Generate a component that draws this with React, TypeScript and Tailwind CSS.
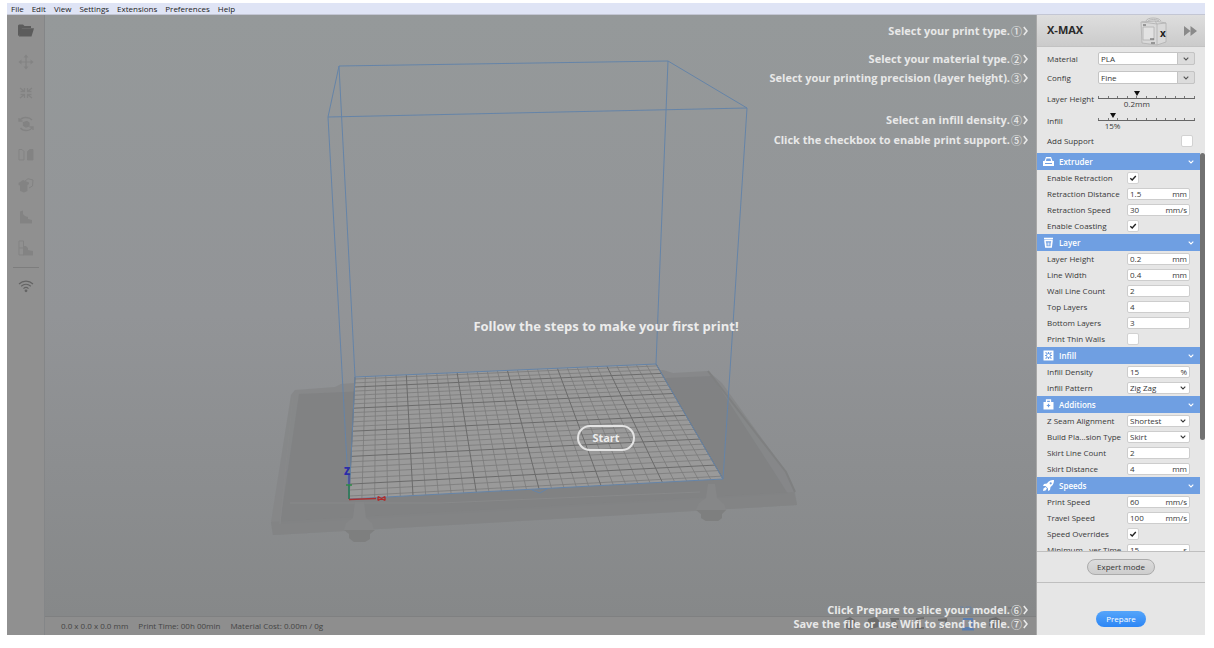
import React from "react";

type Pt = [number, number];

const MENU = ["File", "Edit", "View", "Settings", "Extensions", "Preferences", "Help"];

/* Build plate corners: back-left, back-right, front-right, front-left */
const PLATE: Pt[] = [[355, 377], [656, 364], [723, 479], [349, 499]];

/* Projects plate coordinates (0..1, 0..1) to the screen */
function project(u: number, v: number): Pt {
  const [[x0, y0], [x1, y1], [x2, y2], [x3, y3]] = PLATE;
  const dx1 = x1 - x2, dx2 = x3 - x2, sx = x0 - x1 + x2 - x3;
  const dy1 = y1 - y2, dy2 = y3 - y2, sy = y0 - y1 + y2 - y3;
  const det = dx1 * dy2 - dx2 * dy1;
  const g = (sx * dy2 - dx2 * sy) / det;
  const h = (dx1 * sy - sx * dy1) / det;
  const w = g * u + h * v + 1;
  return [
    ((x1 - x0 + g * x1) * u + (x3 - x0 + h * x3) * v + x0) / w,
    ((y1 - y0 + g * y1) * u + (y3 - y0 + h * y3) * v + y0) / w,
  ];
}

function seg(a: Pt, b: Pt) {
  return `M${a[0].toFixed(1)} ${a[1].toFixed(1)}L${b[0].toFixed(1)} ${b[1].toFixed(1)}`;
}

let minor = "";
let major = "";
for (let i = 0; i <= 30; i++) {
  const d = seg(project(i / 30, 0), project(i / 30, 1));
  if (i % 5 === 0) major += d;
  else minor += d;
}
for (let i = 0; i < 25; i++) {
  const v = (i + 0.5) / 25;
  const d = seg(project(0, v), project(1, v));
  if (i % 5 === 2) major += d;
  else minor += d;
}

function Scene() {
  return (
    <svg viewBox="45 15 991 601" preserveAspectRatio="xMidYMid meet" className="block h-full w-full" aria-hidden="true">
      <g>
        <path d="M295 390L335 387L341 384L355 383L663 370L673 373L708 371L722 383L786 472L795 492L797 505L540 520L273 535L271 522L291 395Z" fill="#858687" opacity="0.8" />
        <path d="M299 394L712 376L778 478L788 494L280 524Z" fill="#7f8081" opacity="0.75" />
        <path d="M271 522L794 492L797 505L273 535Z" fill="#828384" opacity="0.8" />
        <path d="M708 371L786 472L795 492" fill="none" stroke="#7f8081" strokeWidth="2" />
        <path d="M293 395L280 524M290 503L440 503L700 492" fill="none" stroke="#88898a" strokeWidth="1" />
        <path d="M355 502h9l2 16l6 5l2 7l-5 3v6l-5 3h-10l-5-4v-5l-5-3l2-7l7-5z" fill="#868788" />
        <path d="M344 530h31l-5 4v5l-5 3h-11l-5-4v-4z" fill="#7e7f7f" />
        <path d="M708 484h7l2 14l7 6l2 6l-4 4v4l-4 3h-12l-5-3v-4l-5-4l3-7l7-5z" fill="#868788" />
        <path d="M696 510h30l-4 4v4l-4 3h-12l-5-3v-4z" fill="#7e7f7f" />
      </g>
      <path d="M355 377L656 364L723 479L349 499Z" fill="#9a9a9a" />
      <path d={minor} stroke="#7b7b7b" strokeWidth="0.8" fill="none" />
      <path d={major} stroke="#6b6b6b" strokeWidth="1" fill="none" />
      <g fill="none" stroke="#6584a8" strokeWidth="1">
        <path d="M355 377L656 364L723 479L349 499Z" />
        <path d="M339 66L668 61L747 108L328 117Z" />
        <path d="M339 66L355 377M668 61L656 364M747 108L723 479M328 117L349 499" />
        <path d="M532 490L540 493L547 489" />
      </g>
      <path d="M349 499V475" stroke="#3a3aa0" strokeWidth="1.2" />
      <path d="M349 499V485M346 485H352" stroke="#2f8a45" strokeWidth="1.4" />
      <path d="M349 499.500L376 498.500" stroke="#a83232" strokeWidth="1.4" />
      <text x="344" y="475" fontSize="10" fontWeight="800" fill="#2c2ca8">Z</text>
      <path d="M378 496.500L385 500.500M378 500.500L385 496.500M378 496.500V500.500M385 496.500V500.500" stroke="#b02a2a" strokeWidth="1.300" />
    </svg>
  );
}

const toolBtn = "flex h-[31px] w-full items-center justify-center";

function Toolbar() {
  return (
    <nav aria-label="Tools" className="flex w-[38px] shrink-0 flex-col items-center border-r border-[#848688] bg-[#909090] text-[#838383]">
      <button aria-label="Open" className={toolBtn + " text-[#5c5c5c]"}>
        <svg width="16" height="13" viewBox="0 0 16 13" fill="currentColor"><path d="M0 1.500L1 0.500H5L6.500 2H13V4H4L1.500 11L0.500 12L0 11Z" /><path d="M2.500 4.300H16L13.500 12.500H1Z" /></svg>
      </button>
      <button aria-label="Move" className={toolBtn}>
        <svg width="16" height="16" viewBox="0 0 16 16" fill="currentColor"><path d="M8 0.500L10.500 3.500H8.600V7.400H12.500V5.500L15.500 8L12.500 10.500V8.600H8.600V12.500H10.500L8 15.500L5.500 12.500H7.400V8.600H3.500V10.500L0.500 8L3.500 5.500V7.400H7.400V3.500H5.500Z" /></svg>
      </button>
      <button aria-label="Scale" className={toolBtn}>
        <svg width="14" height="14" viewBox="0 0 14 14" fill="none" stroke="currentColor" strokeWidth="1.300"><path d="M1 2L5.500 5.500M5.500 2V5.500H1.500M13 2L8.500 5.500M8.500 2V5.500H12.500M1 12L5.500 8.500M5.500 12V8.500H1.500M13 12L8.500 8.500M8.500 12V8.500H12.500" /></svg>
      </button>
      <button aria-label="Rotate" className={toolBtn}>
        <svg width="16" height="16" viewBox="0 0 16 16" fill="none" stroke="currentColor" strokeWidth="1.300"><path d="M1 2V5H4.500M1.200 5C4 0.500 11 0.500 14 4M15 14V11H11.500M14.800 11C12 15.500 5 15.500 2.500 12" /><path d="M5.500 6.500L9 5.500L11 7V10L8 11L5.500 9.500Z" fill="currentColor" /></svg>
      </button>
      <button aria-label="Mirror" className={toolBtn}>
        <svg width="16" height="13" viewBox="0 0 16 13" fill="none" stroke="currentColor" strokeWidth="1"><path d="M1 1.500H4L6 3.500V12H1Z" /><path d="M15 1.500H12L9.500 3.500V12H15Z" fill="currentColor" /></svg>
      </button>
      <button aria-label="Per model settings" className={toolBtn}>
        <svg width="16" height="15" viewBox="0 0 16 15" fill="currentColor"><path d="M0.500 5L5 2L11 4.500V6L9.500 7V13L6 14.500L2 13V7.500L0.500 7Z" /><path d="M7 3L10 0.700L15 2L14.500 8L11 10" fill="none" stroke="currentColor" strokeWidth="1" /></svg>
      </button>
      <button aria-label="Support blocker" className={toolBtn}>
        <svg width="14" height="14" viewBox="0 0 14 14" fill="currentColor"><path d="M1 1.500L4 0.500V4L6 6L9 7V9L13 10V13.500H1Z" /></svg>
      </button>
      <button aria-label="Support editor" className={toolBtn}>
        <svg width="16" height="16" viewBox="0 0 16 16" fill="currentColor"><path d="M5 6H8L10 8V10L15 11V15.500H5Z" /><path d="M1 1H5.500V15H1ZM1 8H5" fill="none" stroke="currentColor" strokeWidth="1" /></svg>
      </button>
      <hr className="mt-1 w-[26px] border-[#7d7d7d]" />
      <button aria-label="Wi-Fi" className={toolBtn + " mt-0.5 text-[#646464]"}>
        <svg width="16" height="14" viewBox="0 0 16 14" fill="none" stroke="currentColor" strokeWidth="1.200"><path d="M1 5C5 1.200 11 1.200 15 5M3.200 7.300C6 4.800 10 4.800 12.800 7.300M5.500 9.600C7 8.200 9 8.200 10.500 9.600" /><circle cx="8" cy="11.800" r="1.400" fill="currentColor" stroke="none" /></svg>
      </button>
    </nav>
  );
}

function Hint({ text, mark }: { text: string; mark: string }) {
  return (
    <p className="flex h-[14px] items-center justify-end whitespace-nowrap text-[11px] font-bold leading-[14px] text-[#e8e8e8]">
      <span>{text}</span>
      <span className="w-[13px] text-center font-['Noto_Sans_CJK_SC',sans-serif] font-medium">{mark}</span>
      <svg width="5" height="10" viewBox="0 0 5 10" fill="none" stroke="currentColor" strokeWidth="1.600" aria-hidden="true"><path d="M0.800 1L4 5L0.800 9" /></svg>
    </p>
  );
}

function StatusIcons() {
  return (
    <svg width="190" height="26" viewBox="0 0 190 26" aria-hidden="true" className="absolute bottom-1 right-4">
      <g fill="#6c6c6c">
        <path d="M14 15l6-3l5 3v7l-5 3l-6-3zM38 14l7-2l4 3v7l-8 2l-4-3zM60 13h9v2h-3l2 8h-9v-2h4zM86 13l8-1v2h-5v8h5v2h-8zM108 14l9-1v8l-6 3v-3h4v-5h-7zM159 14l7-2l5 3v6l-6 3l-6-3z" />
        <path d="M166 2h3v7h-3zM172 2l6 6M178 2h4v2h-4z" opacity="0.5" />
      </g>
      <path d="M115 14h8v9h-8zM113 24.500h12" fill="none" stroke="#5b7eb0" strokeWidth="2" transform="translate(19 0)" />
      <path d="M130 2h3v7M136 2h5v6h-5z" fill="none" stroke="#5b7eb0" strokeWidth="1" opacity="0.6" />
    </svg>
  );
}

function Viewport() {
  return (
    <main className="relative flex min-w-0 flex-1 flex-col">
      <div className="min-h-0 flex-1 bg-linear-to-b from-[#95999a] via-[#929497] to-[#868889]">
        <Scene />
      </div>
      <footer className="flex h-[19px] shrink-0 items-center gap-2.5 border-t border-[#7f8081] bg-[#8e8e8e] pl-4 text-[8px] text-[#444]">
        <span>0.0 x 0.0 x 0.0 mm</span>
        <span>Print Time: 00h 00min</span>
        <span>Material Cost: 0.00m / 0g</span>
      </footer>
      <StatusIcons />
      <div className="absolute inset-0 flex flex-col justify-between pb-1 pr-2 pt-[9px]">
        <div>
          <Hint text="Select your print type." mark="①" />
          <div className="mt-[14px] flex flex-col gap-[5px]">
            <Hint text="Select your material type." mark="②" />
            <Hint text="Select your printing precision (layer height)." mark="③" />
          </div>
          <div className="mt-7 flex flex-col gap-[6px]">
            <Hint text="Select an infill density." mark="④" />
            <Hint text="Click the checkbox to enable print support." mark="⑤" />
          </div>
        </div>
        <div>
          <Hint text="Click Prepare to slice your model." mark="⑥" />
          <Hint text="Save the file or use Wifi to send the file." mark="⑦" />
        </div>
      </div>
      <div className="absolute inset-x-0 top-[49%] -mt-px flex flex-col items-center pl-[131px] text-[#ececec]">
        <h1 className="text-[13px] font-bold leading-4">Follow the steps to make your first print!</h1>
        <button className="mt-[91px] h-[26px] w-[58px] rounded-full border-2 border-[#e4e4e4] text-[11px] font-bold">Start</button>
      </div>
    </main>
  );
}

function Chevron() {
  return (
    <svg width="6" height="4" viewBox="0 0 6 4" fill="none" stroke="currentColor" strokeWidth="1.100" aria-hidden="true" className="pointer-events-none">
      <path d="M0.700 0.700L3 3L5.300 0.700" />
    </svg>
  );
}

function CheckBox({ id, checked }: { id: string; checked?: boolean }) {
  return (
    <span className="relative flex size-3">
      <input id={id} type="checkbox" defaultChecked={checked} className="peer size-3 appearance-none rounded-xs border border-[#d2d2d2] bg-white" />
      <svg viewBox="0 0 12 12" className="pointer-events-none absolute inset-0 hidden peer-checked:block" fill="none" stroke="#222" strokeWidth="1.400" aria-hidden="true">
        <path d="M3.300 6.200L5.200 8L8.800 4" />
      </svg>
    </span>
  );
}

type Field = { label: string; value?: string; unit?: string; check?: boolean; options?: string[] };

function SettingRow({ id, field }: { id: string; field: Field }) {
  return (
    <div className="flex h-4 items-center px-[10px]">
      <label htmlFor={id} className="w-20 shrink-0 whitespace-nowrap">{field.label}</label>
      {field.check !== undefined ? (
        <CheckBox id={id} checked={field.check} />
      ) : field.options ? (
        <div className="relative flex min-w-0 flex-1 items-center">
          <select id={id} defaultValue={field.options[0]} className="h-3 w-full appearance-none rounded-xs border border-[#cdcdcd] bg-white pl-[2px] leading-[10px]">
            {field.options.map((o) => <option key={o}>{o}</option>)}
          </select>
          <span className="pointer-events-none absolute right-1"><Chevron /></span>
        </div>
      ) : (
        <div className="flex h-3 min-w-0 flex-1 items-center rounded-xs border border-[#cdcdcd] bg-white px-[2px]">
          <input id={id} defaultValue={field.value} className="h-[10px] w-full min-w-0 flex-1 bg-transparent leading-[10px] outline-none" />
          {field.unit && <span className="leading-[10px]">{field.unit}</span>}
        </div>
      )}
    </div>
  );
}

const ICONS: Record<string, React.ReactNode> = {
  Extruder: <><path d="M3 1h5l1.500 4H11v5H0V5h1.500z" fill="#fff" /><path d="M3.500 2.500h4L8 5H3z" fill="#6f9fe2" /><path d="M2 7.500h7" stroke="#6f9fe2" /></>,
  Layer: <><path d="M1 1.500h9M1.300 3.500h8.400M2 4l.8 6h5.400L9 4" fill="none" stroke="#fff" strokeWidth="1.500" /><path d="M4 5.500v3M5.500 5.500v3M7 5.500v3" stroke="#fff" strokeWidth="0.700" /></>,
  Infill: <><path d="M0.500 0.500h10v10h-10z" fill="#fff" /><path d="M5.500 2v2M5.500 7v2M2 5.500h2M7 5.500h2M2.500 2.500l1.500 1M8.500 2.500l-1.500 1M2.500 8.500L4 7.500M8.500 8.500L7 7.500" stroke="#6f9fe2" strokeWidth="1.200" /><circle cx="5.500" cy="5.500" r="2" fill="none" stroke="#6f9fe2" strokeWidth="0.800" /></>,
  Additions: <><path d="M0.500 3h10v7.500h-10z" fill="#fff" /><path d="M3.500 3V1h4v2" fill="none" stroke="#fff" strokeWidth="1.300" /><path d="M5.500 4.800v3.400M3.800 6.500h3.400" stroke="#6f9fe2" strokeWidth="1.200" /></>,
  Speeds: <><path d="M11 0C7 0 5.500 1.500 4 3.500L1 4L0 6L2.500 6L5 8.500V11L7 10L7.500 7C9.500 5.500 11 4 11 0Z" fill="#fff" /><circle cx="7.700" cy="3.300" r="1.100" fill="#6f9fe2" /><path d="M2.500 7L0.500 8.500L0 11L2.500 10.500L4 8.500Z" fill="#fff" /></>,
};

const SECTIONS: { title: string; fields: Field[] }[] = [
  { title: "Extruder", fields: [
    { label: "Enable Retraction", check: true },
    { label: "Retraction Distance", value: "1.5", unit: "mm" },
    { label: "Retraction Speed", value: "30", unit: "mm/s" },
    { label: "Enable Coasting", check: true },
  ] },
  { title: "Layer", fields: [
    { label: "Layer Height", value: "0.2", unit: "mm" },
    { label: "Line Width", value: "0.4", unit: "mm" },
    { label: "Wall Line Count", value: "2" },
    { label: "Top Layers", value: "4" },
    { label: "Bottom Layers", value: "3" },
    { label: "Print Thin Walls", check: false },
  ] },
  { title: "Infill", fields: [
    { label: "Infill Density", value: "15", unit: "%" },
    { label: "Infill Pattern", options: ["Zig Zag", "Grid", "Lines"] },
  ] },
  { title: "Additions", fields: [
    { label: "Z Seam Alignment", options: ["Shortest", "Random"] },
    { label: "Build Pla...sion Type", options: ["Skirt", "Brim", "Raft"] },
    { label: "Skirt Line Count", value: "2" },
    { label: "Skirt Distance", value: "4", unit: "mm" },
  ] },
  { title: "Speeds", fields: [
    { label: "Print Speed", value: "60", unit: "mm/s" },
    { label: "Travel Speed", value: "100", unit: "mm/s" },
    { label: "Speed Overrides", check: true },
    { label: "Minimum...yer Time", value: "15", unit: "s" },
  ] },
];

function Slider({ id, label, value, text }: { id: string; label: string; value: number; text: string }) {
  const at = `${value}%`;
  return (
    <div className="flex h-[22px] items-start px-[10px]">
      <label htmlFor={id} className="mt-1 w-[51px] shrink-0 whitespace-nowrap leading-3">{label}</label>
      <div className="relative h-5 min-w-0 flex-1">
        <div className="flex h-[10px] items-end justify-between border-b border-[#666]">
          {Array.from({ length: 11 }, (_, i) => <i key={i} className="h-[2px] w-px bg-[#777]" />)}
        </div>
        <svg width="6" height="5" viewBox="0 0 6 5" className="absolute top-0.5 -translate-x-1/2" style={{ left: at }} aria-hidden="true"><path d="M0 0H6L3 5Z" fill="#111" /></svg>
        <output htmlFor={id} className="absolute top-[10px] -translate-x-1/2 leading-[10px]" style={{ left: at }}>{text}</output>
        <input id={id} type="range" defaultValue={value} className="absolute inset-x-0 top-0 h-[10px] w-full opacity-0" />
      </div>
    </div>
  );
}

function TopSelect({ id, label, options }: { id: string; label: string; options: string[] }) {
  return (
    <div className="flex h-[19px] items-center px-[10px]">
      <label htmlFor={id} className="w-[51px] shrink-0">{label}</label>
      <div className="relative flex min-w-0 flex-1">
        <select id={id} defaultValue={options[0]} className="h-[13px] w-full appearance-none rounded-xs border border-[#c4c4c4] bg-white pl-[2px] leading-[11px]">
          {options.map((o) => <option key={o}>{o}</option>)}
        </select>
        <span className="pointer-events-none absolute inset-y-0 right-0 flex w-[18px] items-center justify-center rounded-r-xs border border-[#c4c4c4] bg-[#dcdcdc] text-[#555]"><Chevron /></span>
      </div>
    </div>
  );
}

function Sidebar() {
  return (
    <aside className="flex w-[169px] shrink-0 flex-col border-l border-[#a8a8a8] bg-[#e6e6e6] text-[8px] text-[#383838]">
      <header className="flex h-8 shrink-0 items-center border-b border-[#c2c2c2] bg-linear-to-b from-[#dedede] to-[#cbcbcb] pl-[10px] pr-2">
        <h2 className="flex-1 text-[11px] font-bold text-[#2a2a2a]">X-MAX</h2>
        <svg width="28" height="30" viewBox="0 0 28 30" className="mr-4" fill="none" stroke="#b4b4b4" strokeWidth="0.900" aria-hidden="true">
          <path d="M6 5C7 1 19 1 21 5M8 5C10 3 17 3 19 5" />
          <path d="M1 6L15 5L26 7V26L17 29L2 27Z" fill="#d9d9d9" />
          <path d="M17 8V29M15 5L17 8L26 7M2 6L17 8" />
          <path d="M3 11H14V24H3Z" fill="#e2e2e2" />
          <path d="M3 9H6M10 23H14M11 27H15" stroke="#555" strokeWidth="1" />
          <text x="20" y="21" fontSize="10" fontWeight="700" fill="#222" stroke="none">x</text>
        </svg>
        <button aria-label="Collapse panel">
          <svg width="13" height="10" viewBox="0 0 13 10" fill="#8a8a8a"><path d="M0 0L6.500 5L0 10ZM6.500 0L13 5L6.500 10Z" /></svg>
        </button>
      </header>
      <section className="flex shrink-0 flex-col pt-0.5">
        <TopSelect id="material" label="Material" options={["PLA", "ABS", "PETG"]} />
        <TopSelect id="config" label="Config" options={["Fine", "Normal", "Fast"]} />
        <div className="mt-[2px]">
          <Slider id="layer-height" label="Layer Height" value={40} text="0.2mm" />
          <Slider id="infill" label="Infill" value={15} text="15%" />
        </div>
        <div className="mb-1 flex h-4 items-center pl-[10px] pr-3">
          <label htmlFor="add-support" className="flex-1">Add Support</label>
          <CheckBox id="add-support" />
        </div>
      </section>
      <div className="flex min-h-0 flex-1">
        <div className="min-w-0 flex-1 overflow-y-auto [scrollbar-width:none]">
          {SECTIONS.map((s) => (
            <section key={s.title}>
              <h3>
                <button className="flex h-[17px] w-full items-center bg-[#6f9fe2] px-1.5 text-[8px] font-semibold text-white">
                  <svg width="11" height="11" viewBox="0 0 11 11" aria-hidden="true">{ICONS[s.title]}</svg>
                  <span className="ml-[5px] flex-1 text-left">{s.title}</span>
                  <Chevron />
                </button>
              </h3>
              {s.fields.map((f, i) => <SettingRow key={f.label} id={`${s.title}-${i}`} field={f} />)}
            </section>
          ))}
        </div>
        <div className="w-[5px] shrink-0"><div className="h-[72%] rounded-full bg-[#717171]" /></div>
      </div>
      <div className="flex h-8 shrink-0 items-center justify-center border-y border-[#bfbfbf]">
        <button className="h-4 w-[68px] rounded-full border border-[#ababab] bg-linear-to-b from-[#dcdcdc] to-[#cdcdcd]">Expert mode</button>
      </div>
      <div className="flex h-[52px] shrink-0 items-end justify-center pb-2">
        <button className="h-4 w-[50px] rounded-full bg-linear-to-b from-[#55a5fa] to-[#2c86f5] text-white">Prepare</button>
      </div>
    </aside>
  );
}

export default function App() {
  return (
    <div className="flex h-screen flex-col bg-white pb-[13px] pl-[7px] pr-[9px] pt-[3px] font-['Open_Sans','Noto_Sans_CJK_SC',sans-serif]">
      <nav aria-label="Menu" className="flex h-3 shrink-0 items-center gap-2 border-b border-[#c3c6d4] bg-[#dfe4f5] pl-1 text-[8px] text-[#222]">
        {MENU.map((m) => <button key={m}>{m}</button>)}
      </nav>
      <div className="flex min-h-0 flex-1">
        <Toolbar />
        <Viewport />
        <Sidebar />
      </div>
    </div>
  );
}
